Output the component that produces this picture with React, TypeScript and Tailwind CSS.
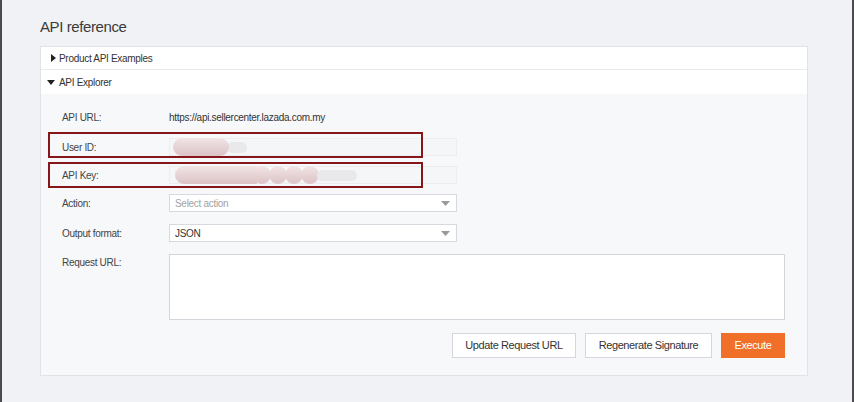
import React from "react";

function Caret({ open }: { open?: boolean }) {
  return open ? (
    <svg width="8" height="5" viewBox="0 0 8 5" className="mr-[4px]">
      <path d="M0 0 L8 0 L4 5 Z" fill="#222" />
    </svg>
  ) : (
    <svg width="5" height="8" viewBox="0 0 5 8" className="mr-[3px] ml-[2px]">
      <path d="M0 0 L5 4 L0 8 Z" fill="#222" />
    </svg>
  );
}

function SelectArrow() {
  return (
    <svg width="9" height="5" viewBox="0 0 9 5">
      <path d="M0 0 L9 0 L4.5 5 Z" fill="#9a9a9a" />
    </svg>
  );
}

function Label({ children }: { children: React.ReactNode }) {
  return <div className="w-[107px] shrink-0 text-[10px] tracking-[-0.3px] text-[#444]">{children}</div>;
}

export default function App() {
  return (
    <div className="w-[854px] h-[402px] bg-[#f1f2f6] border-l-2 border-r-2 border-[#4b4b4b] overflow-hidden font-['Liberation_Sans',Arial,sans-serif]">
      <div className="pl-[38px] pt-[17px]">
        <h1 className="text-[15px] leading-[20px] tracking-[-0.4px] text-[#3a3a3a] font-normal">API reference</h1>
        <div className="mt-[9px] w-[768px] h-[330px] border border-[#e2e3e8] bg-[#f7f8fa] flex flex-col">
          <div className="h-[23px] bg-white flex items-center pl-[8px] text-[10px] tracking-[-0.3px] text-[#333] border-b border-[#ebebee]">
            <Caret />
            <span>Product API Examples</span>
          </div>
          <div className="h-[24px] bg-white flex items-center pl-[6px] text-[10px] tracking-[-0.3px] text-[#333]">
            <Caret open />
            <span>API Explorer</span>
          </div>
          <div className="relative flex-1 pl-[21px] pr-[22px] pt-[14px] flex flex-col">
            <div className="h-[18px] flex items-center">
              <Label>API URL:</Label>
              <div className="text-[10px] tracking-[-0.3px] text-[#333]">https://api.sellercenter.lazada.com.my</div>
            </div>
            <div className="mt-[12px] h-[18px] flex items-center">
              <Label>User ID:</Label>
              <div className="w-[288px] h-[18px] bg-[#f5f6f8] border border-[#ecedf0] flex items-center pl-[3px]">
                <span className="w-[56px] h-[18px] rounded-full bg-gradient-to-b from-[#f0e4e5] to-[#dcc3c6] blur-[0.6px]" />
                <span className="w-[20px] h-[11px] rounded-full bg-[#e9e9ec] -ml-[2px]" />
              </div>
            </div>
            <div className="mt-[10px] h-[18px] flex items-center">
              <Label>API Key:</Label>
              <div className="w-[288px] h-[18px] bg-[#f5f6f8] border border-[#ecedf0] flex items-center pl-[5px]">
                <span className="w-[82px] h-[18px] rounded-l-full bg-gradient-to-b from-[#f0e4e5] to-[#dcc3c6] blur-[0.6px]" />
                <span className="w-[18px] h-[18px] rounded-full bg-gradient-to-b from-[#f0e4e5] to-[#dcc3c6] -ml-[4px]" />
                <span className="w-[18px] h-[18px] rounded-full bg-gradient-to-b from-[#f0e4e5] to-[#dcc3c6] -ml-[2px]" />
                <span className="w-[18px] h-[18px] rounded-full bg-gradient-to-b from-[#f0e4e5] to-[#dcc3c6] -ml-[2px]" />
                <span className="w-[18px] h-[18px] rounded-full bg-gradient-to-b from-[#f0e4e5] to-[#dcc3c6] -ml-[2px]" />
                <span className="w-[40px] h-[11px] rounded-full bg-[#e9e9ec] -ml-[2px]" />
              </div>
            </div>
            <div className="mt-[10px] h-[18px] flex items-center">
              <Label>Action:</Label>
              <div className="w-[288px] h-[18px] bg-white border border-[#d8d9de] flex items-center justify-between pl-[5px] pr-[6px]">
                <span className="text-[10px] tracking-[-0.3px] text-[#a3a3a3]">Select action</span>
                <SelectArrow />
              </div>
            </div>
            <div className="mt-[12px] h-[18px] flex items-center">
              <Label>Output format:</Label>
              <div className="w-[288px] h-[18px] bg-white border border-[#d8d9de] flex items-center justify-between pl-[5px] pr-[6px]">
                <span className="text-[10px] tracking-[-0.3px] text-[#333]">JSON</span>
                <SelectArrow />
              </div>
            </div>
            <div className="mt-[12px] h-[66px] flex items-start">
              <div className="w-[107px] shrink-0 text-[10px] tracking-[-0.3px] text-[#444] leading-[18px]">Request URL:</div>
              <div className="w-[616px] h-[66px] bg-white border border-[#d4d5da]" />
            </div>
            <div className="mt-[13px] flex justify-end gap-[9px]">
              <button className="h-[25px] w-[124px] bg-white border border-[#d6d7db] text-[11px] tracking-[-0.4px] text-[#333]">Update Request URL</button>
              <button className="h-[25px] w-[127px] bg-white border border-[#d6d7db] text-[11px] tracking-[-0.4px] text-[#333]">Regenerate Signature</button>
              <button className="h-[25px] w-[64px] bg-[#f07029] text-[11px] tracking-[-0.4px] text-white">Execute</button>
            </div>
            <div className="absolute left-[7px] top-[38px] w-[375px] h-[26px] border-2 border-[#85161c]" />
            <div className="absolute left-[7px] top-[68px] w-[375px] h-[26px] border-2 border-[#85161c]" />
          </div>
        </div>
      </div>
    </div>
  );
}
